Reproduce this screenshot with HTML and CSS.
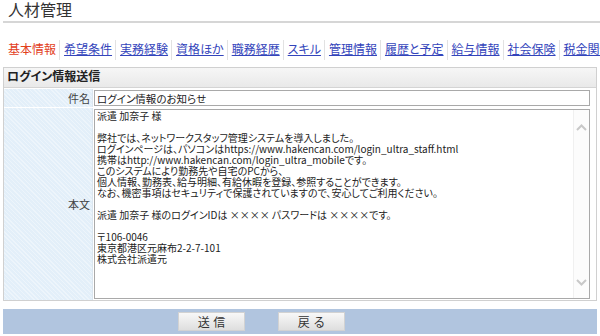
FILE: index.html
```html
<!DOCTYPE html>
<html lang="ja">
<head>
  <meta charset="UTF-8">
  <meta name="viewport" content="width=device-width, initial-scale=1.0">
  <title>人材管理</title>
  <link rel="stylesheet" href="styles.css">
</head>
<body>
  <div class="page">
    <h1 class="title">人材管理</h1>

    <!-- タブ -->
    <nav class="tabs">
      <a class="tab active">基本情報</a>
      <a class="tab" href="#">希望条件</a>
      <a class="tab" href="#">実務経験</a>
      <a class="tab" href="#">資格ほか</a>
      <a class="tab" href="#">職務経歴</a>
      <a class="tab" href="#">スキル</a>
      <a class="tab" href="#">管理情報</a>
      <a class="tab" href="#">履歴と予定</a>
      <a class="tab" href="#">給与情報</a>
      <a class="tab" href="#">社会保険</a>
      <a class="tab" href="#">税金関係</a>
    </nav>

    <div class="panel">
      <h2 class="panel-head">ログイン情報送信</h2>
      <div class="row">
        <label class="label" for="subject">件名</label>
        <div class="field">
          <input type="text" id="subject" class="subject" value="ログイン情報のお知らせ">
        </div>
      </div>
      <div class="row body-row">
        <label class="label" for="body">本文</label>
        <div class="field">
          <div class="memo">
            <textarea id="body" class="body-text">派遣 加奈子 様

弊社では、ネットワークスタッフ管理システムを導入しました。
ログインページは、パソコンはhttps://www.hakencan.com/login_ultra_staff.html
携帯はhttp://www.hakencan.com/login_ultra_mobileです。
このシステムにより勤務先や自宅のPCから、
個人情報、勤務表、給与明細、有給休暇を登録、参照することができます。
なお、機密事項はセキュリティで保護されていますので、安心してご利用ください。

派遣 加奈子 様のログインIDは ×××× パスワードは ××××です。

〒106-0046
東京都港区元麻布2-2-7-101
株式会社派遣元</textarea>
            <div class="scroll">
              <svg width="11" height="7" viewBox="0 0 11 7"><path d="M1 6 L5.5 1.5 L10 6" fill="none" stroke="#c8c8c8" stroke-width="2"/></svg>
              <svg width="11" height="7" viewBox="0 0 11 7"><path d="M1 1 L5.5 5.5 L10 1" fill="none" stroke="#c8c8c8" stroke-width="2"/></svg>
            </div>
          </div>
        </div>
      </div>
    </div>

    <div class="actions">
      <button class="btn">送 信</button>
      <button class="btn">戻 る</button>
    </div>
  </div>
</body>
</html>
```

FILE: styles.css
```css
body {
  margin: 0;
  padding: 0;
  background-color: #fff;
  font-family: "Liberation Sans", "Noto Sans CJK JP", sans-serif;
  font-feature-settings: "palt";
  color: #333;
}

.page {
  width: 600px;
  overflow: hidden;
}

.title {
  margin: 0 0 0 3px;
  padding: 1px 5px 0;
  height: 20px;
  line-height: 19px;
  font-size: 16px;
  font-weight: normal;
  color: #333;
  border-bottom: 2px solid #d6d6d6;
}

.tabs {
  display: flex;
  margin-top: 17px;
  padding-left: 4px;
  height: 20px;
  white-space: nowrap;
}

.tab {
  flex: none;
  padding: 0 3px 0 4px;
  line-height: 20px;
  font-size: 12px;
  color: #3344bb;
  text-decoration: underline;
  border-left: 1px solid #e2e2e2;
}

.tab.active {
  color: #e2401c;
  text-decoration: none;
  border-left: none;
}

.panel {
  margin: 7px 3px 0;
  border: 1px solid #d0d0d0;
}

.panel-head {
  margin: 0;
  padding: 0 3px;
  height: 19px;
  line-height: 19px;
  font-size: 12px;
  font-weight: bold;
  color: #222;
  background: linear-gradient(#f6f6f6, #e9e9e9);
  border-bottom: 1px solid #d4d4d4;
}

.row {
  display: flex;
  border-top: 1px solid #fff;
}

.label {
  flex: none;
  width: 86px;
  padding-right: 2px;
  display: flex;
  align-items: center;
  justify-content: flex-end;
  font-size: 11px;
  color: #444;
  background-color: #e3eff9;
  background-image: repeating-linear-gradient(45deg, rgba(255,255,255,0.35) 0 1px, transparent 1px 3px);
  border-right: 1px solid #dbe6ef;
}

.field {
  flex: 1;
  padding: 1px 6px 1px 1px;
}

.subject {
  display: block;
  box-sizing: border-box;
  width: 100%;
  height: 16px;
  margin: 0;
  padding: 0 2px;
  font: 10.5px "Noto Sans CJK JP", "Liberation Sans", sans-serif;
  font-feature-settings: "palt";
  color: #222;
  border: 1px solid #a9a9a9;
}

.memo {
  display: flex;
  height: 188px;
  border: 1px solid #a9a9a9;
  background: #fff;
}

.body-text {
  flex: 1;
  margin: 0;
  padding: 0 2px;
  border: none;
  outline: none;
  resize: none;
  overflow: hidden;
  font: 10px/11px "Noto Sans CJK JP", "Liberation Sans", sans-serif;
  font-feature-settings: "palt";
  color: #222;
}

.scroll {
  flex: none;
  width: 15px;
  display: flex;
  flex-direction: column;
  justify-content: space-between;
  align-items: center;
  padding: 14px 0 12px;
  background: #fcfcfc;
  border-left: 1px solid #f0f0f0;
}

.actions {
  display: flex;
  gap: 33px;
  margin: 8px 3px 0;
  padding: 3px 0 3px 175px;
  background-color: #b1c5df;
}

.btn {
  width: 67px;
  height: 19px;
  padding: 0;
  font: 12px "Liberation Sans", "Noto Sans CJK JP", sans-serif;
  color: #333;
  background: linear-gradient(#f8f8f8, #dedede);
  border: 1px solid #d2d2d2;
}
```
